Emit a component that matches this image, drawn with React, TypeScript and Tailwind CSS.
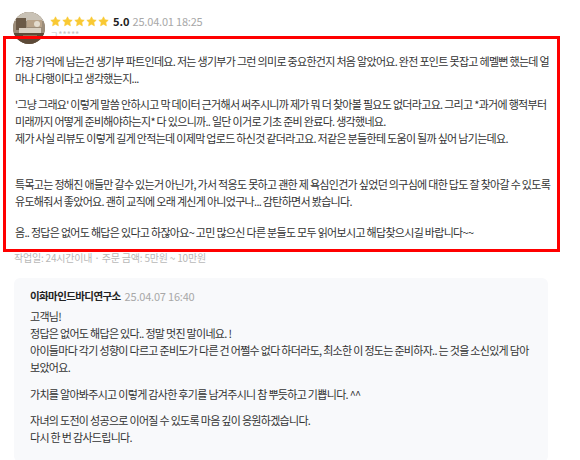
import React from 'react';

const Star: React.FC = () => (
  <svg width="11" height="11" viewBox="0 0 24 24" className="shrink-0">
    <path
      d="M12 1.8l3.1 6.6 7.1.9-5.2 4.9 1.3 7.1L12 17.8l-6.3 3.5 1.3-7.1L1.8 9.3l7.1-.9z"
      fill="#f9c933"
      stroke="#f9c933"
      strokeWidth="1.5"
      strokeLinejoin="round"
    />
  </svg>
);

const Avatar: React.FC = () => (
  <div className="w-[32px] h-[32px] rounded-full overflow-hidden shrink-0 bg-[#8a7a66]">
    <svg width="32" height="32" viewBox="0 0 32 32">
      <rect width="32" height="32" fill="#9c8d7a" />
      <rect x="0" y="0" width="32" height="9" fill="#c9c2b6" />
      <rect x="3" y="6" width="10" height="12" fill="#6b5a47" />
      <rect x="14" y="8" width="15" height="7" fill="#b8a38a" />
      <rect x="6" y="16" width="22" height="5" fill="#d9d0c2" />
      <rect x="0" y="21" width="32" height="11" fill="#5c4a38" />
      <rect x="10" y="23" width="14" height="4" fill="#8d7256" />
      <circle cx="24" cy="12" r="3" fill="#e4dccf" />
    </svg>
  </div>
);

// each block is a paragraph; lines are the visual lines of the original
const reviewBlocks: { lines: string[]; gap: string }[] = [
  {
    lines: [
      '가장 기억에 남는건 생기부 파트인데요. 저는 생기부가 그런 의미로 중요한건지 처음 알았어요. 완전 포인트 못잡고 헤멜뻔 했는데 얼',
      '마나 다행이다고 생각했는지...',
    ],
    gap: 'mt-0',
  },
  {
    lines: [
      "'그냥 그래요' 이렇게 말씀 안하시고 막 데이터 근거해서 써주시니까 제가 뭐 더 찾아볼 필요도 없더라고요. 그리고 *과거에 행적부터",
      '미래까지 어떻게 준비해야하는지* 다 있으니까.. 일단 이거로 기초 준비 완료다. 생각했네요.',
      '제가 사실 리뷰도 이렇게 길게 안적는데 이제막 업로드 하신것 같더라고요. 저같은 분들한테 도움이 될까 싶어 남기는데요.',
    ],
    gap: 'mt-[9px]',
  },
  {
    lines: [
      '특목고는 정해진 애들만 갈수 있는거 아닌가, 가서 적응도 못하고 괜한 제 욕심인건가 싶었던 의구심에 대한 답도 잘 찾아갈 수 있도록',
      '유도해줘서 좋았어요. 괜히 교직에 오래 계신게 아니었구나... 감탄하면서 봤습니다.',
    ],
    gap: 'mt-[29px]',
  },
  {
    lines: ['음.. 정답은 없어도 해답은 있다고 하잖아요~ 고민 많으신 다른 분들도 모두 읽어보시고 해답찾으시길 바랍니다~~'],
    gap: 'mt-[14px]',
  },
];

const replyBlocks: { lines: string[]; gap: string }[] = [
  {
    lines: [
      '고객님!',
      '정답은 없어도 해답은 있다.. 정말 멋진 말이네요. !',
      '아이들마다 각기 성향이 다르고 준비도가 다른 건 어쩔수 없다 하더라도, 최소한 이 정도는 준비하자.. 는 것을 소신있게 담아',
      '보았어요.',
    ],
    gap: 'mt-0',
  },
  {
    lines: ['가치를 알아봐주시고 이렇게 감사한 후기를 남겨주시니 참 뿌듯하고 기쁩니다. ^^'],
    gap: 'mt-[10px]',
  },
  {
    lines: ['자녀의 도전이 성공으로 이어질 수 있도록 마음 깊이 응원하겠습니다.', '다시 한 번 감사드립니다.'],
    gap: 'mt-[9px]',
  },
];

const Lines: React.FC<{ blocks: { lines: string[]; gap: string }[] }> = ({ blocks }) => (
  <>
    {blocks.map((b, i) => (
      <div key={i} className={b.gap}>
        {b.lines.map((l, j) => (
          <p key={j} className="whitespace-nowrap">
            {l}
          </p>
        ))}
      </div>
    ))}
  </>
);

export default function App() {
  return (
    <div className="w-[580px] h-[460px] overflow-hidden bg-white font-['Noto_Sans_CJK_KR','Noto_Sans',sans-serif] text-[#333]">
      {/* author */}
      <div className="flex items-start gap-[5px] pl-[13px] pt-[12px]">
        <Avatar />
        <div className="flex flex-col">
          <div className="flex items-center h-[18px]">
            <div className="flex gap-[1px]">
              <Star />
              <Star />
              <Star />
              <Star />
              <Star />
            </div>
            <span className="ml-[4px] text-[11px] font-bold text-[#222]">5.0</span>
            <span className="ml-[3px] text-[11px] text-[#a8a8a8] tracking-[-0.2px]">25.04.01 18:25</span>
          </div>
          <span className="text-[9px] leading-[10px] text-[#c4c4c4]">ㄱ*****</span>
        </div>
      </div>

      {/* review body with highlight frame */}
      <div className="relative ml-[15px] mr-[32px] mt-[9px] text-[11px] leading-[17px] tracking-[-0.7px] text-[#333]">
        <div className="pointer-events-none absolute -left-[12px] -right-[12px] -top-[17px] -bottom-[11px] border-[3px] border-[#ff0000]" />
        <Lines blocks={reviewBlocks} />
      </div>

      <p className="ml-[14px] mt-[10px] text-[10px] leading-[14px] text-[#b8b8b8] tracking-[-0.2px]">
        작업일: 24시간이내 · 주문 금액: 5만원 ~ 10만원
      </p>

      {/* seller reply */}
      <div className="ml-[14px] mr-[32px] mt-[13px] rounded-[6px] bg-[#f8f9fb] pl-[16px] pr-[14px] pt-[10px] pb-[16px]">
        <div className="flex items-center h-[16px]">
          <span className="text-[10.5px] font-bold text-[#222] tracking-[-0.6px]">이화마인드바디연구소</span>
          <span className="ml-[4px] text-[11px] text-[#a8a8a8] tracking-[-0.2px]">25.04.07 16:40</span>
        </div>
        <div className="mt-[4px] text-[11px] leading-[17px] tracking-[-0.7px] text-[#333]">
          <Lines blocks={replyBlocks} />
        </div>
      </div>
    </div>
  );
}
